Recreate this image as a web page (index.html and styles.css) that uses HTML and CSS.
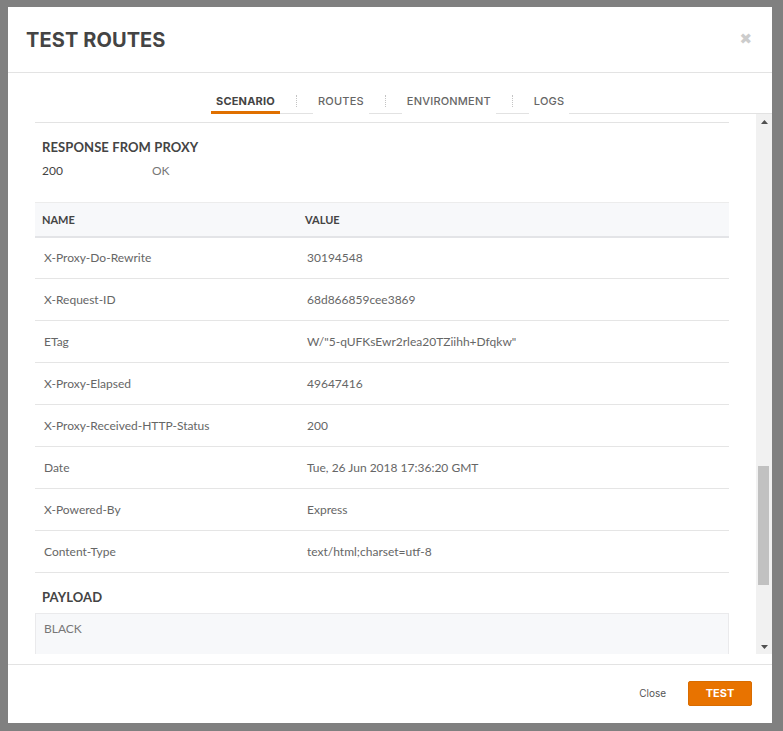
FILE: index.html
```html
<!DOCTYPE html>
<html>
<head>
<meta charset="utf-8">
<title>Test routes</title>
<link rel="stylesheet" href="styles.css">
</head>
<body>
<div class="overlay">
  <div class="modal">
    <header class="modal-header">
      <h1 class="modal-title">TEST ROUTES</h1>
      <span class="modal-close">&#x2716;</span>
    </header>
    <nav class="tabs">
      <span class="tab tab-active">SCENARIO</span>
      <span class="tab-sep"><i></i></span>
      <span class="tab">ROUTES</span>
      <span class="tab-sep"><i></i></span>
      <span class="tab">ENVIRONMENT</span>
      <span class="tab-sep"><i></i></span>
      <span class="tab">LOGS</span>
      <span class="tab-fill"></span>
    </nav>
    <div class="body">
      <div class="content">
        <div class="prev-section"></div>
        <h2 class="section-title">RESPONSE FROM PROXY</h2>
        <div class="status">
          <span class="status-code">200</span>
          <span class="status-text">OK</span>
        </div>
        <table class="headers">
          <thead>
            <tr><th>NAME</th><th>VALUE</th></tr>
          </thead>
          <tbody>
            <tr><td>X-Proxy-Do-Rewrite</td><td>30194548</td></tr>
            <tr><td>X-Request-ID</td><td>68d866859cee3869</td></tr>
            <tr><td>ETag</td><td>W/"5-qUFKsEwr2rlea20TZiihh+Dfqkw"</td></tr>
            <tr><td>X-Proxy-Elapsed</td><td>49647416</td></tr>
            <tr><td>X-Proxy-Received-HTTP-Status</td><td>200</td></tr>
            <tr><td>Date</td><td>Tue, 26 Jun 2018 17:36:20 GMT</td></tr>
            <tr><td>X-Powered-By</td><td>Express</td></tr>
            <tr><td>Content-Type</td><td>text/html;charset=utf-8</td></tr>
          </tbody>
        </table>
        <h2 class="section-title payload-title">PAYLOAD</h2>
        <div class="payload">BLACK</div>
      </div>
      <div class="scrollbar">
        <div class="sb-btn"><svg width="7" height="4" viewBox="0 0 7 4"><path d="M0 4 L3.5 0 L7 4 Z" fill="#505050"/></svg></div>
        <div class="sb-track"><div class="sb-thumb"></div></div>
        <div class="sb-btn"><svg width="7" height="4" viewBox="0 0 7 4"><path d="M0 0 L7 0 L3.5 4 Z" fill="#505050"/></svg></div>
      </div>
    </div>
    <footer class="modal-footer">
      <span class="btn-link">Close</span>
      <span class="btn-primary">TEST</span>
    </footer>
  </div>
</div>
</body>
</html>
```
FILE: styles.css
```css
* { box-sizing: border-box; }
html, body { margin: 0; padding: 0; }
body {
  background: #808080;
  font-family: "Lato", "Open Sans", sans-serif;
  width: 783px;
  height: 731px;
  overflow: hidden;
}
.overlay {
  padding: 7px 11px 8px 8px;
}
.modal {
  width: 764px;
  height: 716px;
  background: #fff;
  display: flex;
  flex-direction: column;
}
.modal-header {
  height: 66px;
  flex: none;
  display: flex;
  align-items: center;
  justify-content: space-between;
  padding: 0 20px 0 18px;
  border-bottom: 1px solid #e3e3e3;
}
.modal-title {
  margin: 0;
  font-family: "Inter", "Open Sans", sans-serif;
  font-weight: 700;
  font-size: 20px;
  letter-spacing: 0.1px;
  color: #444;
  padding-top: 1px;
}
.modal-close {
  font-size: 15px;
  color: #cccccc;
  font-family: "DejaVu Sans", sans-serif;
  font-weight: 700;
  padding-bottom: 1px;
}
.tabs {
  flex: none;
  height: 41px;
  display: flex;
  align-items: flex-end;
  padding-left: 203px;
}
.tab {
  padding: 0 5px 4px;
  line-height: 16px;
  font-family: "Inter", "Open Sans", sans-serif;
  font-size: 11px;
  font-weight: 500;
  color: #666;
  letter-spacing: 0.2px;
  border-bottom: 1px solid transparent;
}
.tab-active {
  color: #444;
  font-weight: 700;
  border-bottom: 1px solid #e07000;
  box-shadow: inset 0 -2px 0 #e07000;
  padding-bottom: 4px;
}
.tab-sep {
  width: 33px;
  height: 23px;
  border-bottom: 1px solid #e2e2e2;
  display: flex;
  justify-content: center;
  padding-top: 4px;
}
.tab-sep i {
  display: block;
  width: 0;
  height: 12px;
  border-left: 1px dotted #c4c4c4;
}
.tab-fill {
  flex: 1;
  height: 1px;
  background: #e2e2e2;
}
.body {
  flex: none;
  height: 540px;
  display: flex;
}
.content {
  flex: 1;
  overflow: hidden;
  padding: 0 27px;
}
.prev-section {
  height: 9px;
  border-bottom: 1px solid #e3e3e3;
}
.section-title {
  margin: 16px 0 0;
  padding-left: 7px;
  font-family: "Lato", sans-serif;
  font-weight: 700;
  font-size: 13px;
  line-height: 16px;
  color: #444;
  letter-spacing: 0.1px;
}
.status {
  display: flex;
  padding-left: 7px;
  margin-top: 8px;
  font-size: 12px;
  line-height: 16px;
}
.status-code { width: 110px; color: #444; }
.status-text { color: #777; }
.headers {
  width: 100%;
  border-collapse: collapse;
  margin-top: 23px;
  font-size: 12px;
}
.headers th {
  text-align: left;
  background: #f7f8fa;
  border-top: 1px solid #ececec;
  border-bottom: 2px solid #e3e4e7;
  height: 34px;
  padding: 0 7px;
  font-weight: 700;
  font-size: 11px;
  color: #444;
}
.headers th:first-child { width: 263px; }
.headers td {
  height: 42px;
  padding: 0 9px;
  color: #666;
  border-bottom: 1px solid #e5e5e5;
}
.payload-title { margin-top: 16px; }
.payload {
  margin-top: 8px;
  height: 60px;
  background: #f7f8fa;
  border: 1px solid #eaeaec;
  padding: 7px 8px;
  font-size: 12px;
  color: #777;
}
.scrollbar {
  width: 16px;
  flex: none;
  background: #f1f1f1;
  display: flex;
  flex-direction: column;
}
.sb-btn {
  height: 15px;
  display: flex;
  align-items: center;
  justify-content: center;
}
.sb-track {
  flex: 1;
  padding: 337px 3px 0 2px;
}
.sb-thumb {
  height: 119px;
  background: #c1c1c1;
}
.modal-footer {
  margin-top: 10px;
  flex: 1;
  border-top: 1px solid #e3e3e3;
  display: flex;
  align-items: center;
  justify-content: flex-end;
  padding: 0 20px 2px;
}
.btn-link {
  font-family: "Inter", sans-serif;
  font-size: 10px;
  color: #555;
  margin-right: 22px;
}
.btn-primary {
  width: 64px;
  height: 25px;
  background: #e87300;
  border: 1px solid #d96c00;
  border-radius: 2px;
  color: #fff;
  font-family: "Inter", sans-serif;
  font-weight: 700;
  font-size: 11px;
  display: flex;
  align-items: center;
  justify-content: center;
}
```
